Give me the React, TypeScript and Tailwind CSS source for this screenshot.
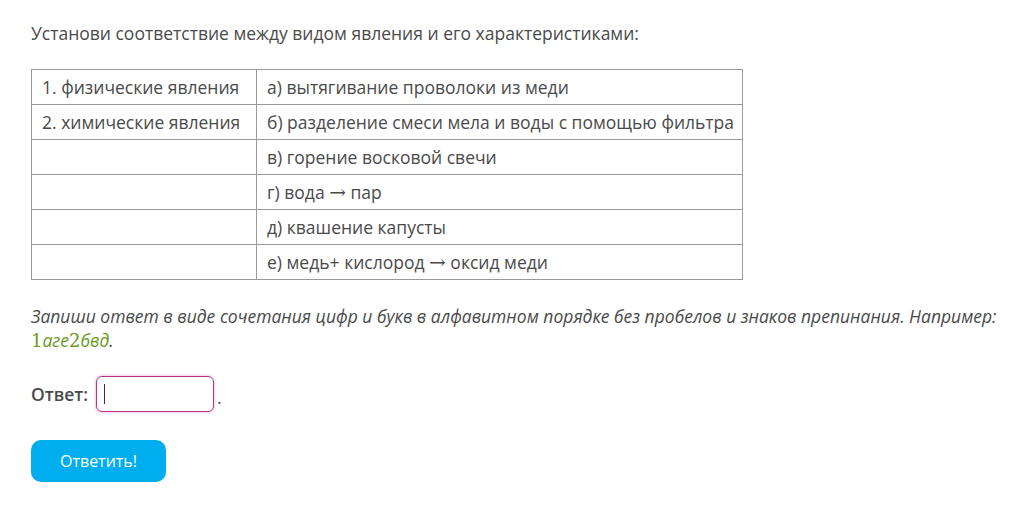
import { useState } from "react";

const Arrow = () => (
  <span className="font-['DejaVu_Serif',serif] text-[20px] leading-none">→</span>
);

const rows: [React.ReactNode, React.ReactNode][] = [
  ["1. физические явления", "а) вытягивание проволоки из меди"],
  ["2. химические явления", "б) разделение смеси мела и воды с помощью фильтра"],
  ["", "в) горение восковой свечи"],
  ["", <>г) вода <Arrow /> пар</>],
  ["", "д) квашение капусты"],
  ["", <>е) медь+ кислород <Arrow /> оксид меди</>],
];

const App = () => {
  const [answer, setAnswer] = useState("");
  return (
    <div className="min-h-[505px] bg-white px-[31px] pt-[20px] text-[17.5px] text-[#4a4a4a] font-['Open_Sans',sans-serif]">
      <p className="leading-[26px]">
        Установи соответствие между видом явления и его характеристиками:
      </p>

      <table className="mt-[23px] border-collapse">
        <tbody>
          {rows.map(([left, right], i) => (
            <tr key={i} className="h-[35px]">
              <td className="border border-[#9a9a9a] pl-[10px] pr-[10px] w-[225px] whitespace-nowrap">
                {left}
              </td>
              <td className="border border-[#9a9a9a] pl-[10px] pr-[6px] w-[486px] whitespace-nowrap">
                {right}
              </td>
            </tr>
          ))}
        </tbody>
      </table>

      <p className="mt-[24px] italic leading-[24px]">
        Запиши ответ в виде сочетания цифр и букв в алфавитном порядке без
        пробелов и знаков препинания. Например:{" "}
        <span className="text-[#6b9a23] not-italic">
          <span className="font-['DejaVu_Serif',serif] text-[18px]">1</span>
          <i>аге</i>
          <span className="font-['DejaVu_Serif',serif] text-[18px]">2</span>
          <i>бвд</i>
        </span>
        .
      </p>

      <div className="mt-[23px] flex items-center">
        <span className="font-semibold">Ответ:</span>
        <div className="relative ml-[8px]">
          <input
            value={answer}
            onChange={(e) => setAnswer(e.target.value)}
            className="block h-[36px] w-[118px] rounded-[6px] border border-[#b8338a] px-[8px] outline-none shadow-[0_0_3px_rgba(184,51,138,0.5)]"
          />
          {answer === "" && (
            <span className="absolute left-[8px] top-[8px] h-[20px] w-px bg-[#333]" />
          )}
        </div>
        <span className="ml-[3px] mt-[6px]">.</span>
      </div>

      <button className="mt-[28px] h-[42px] w-[135px] rounded-[10px] bg-[#00aeef] text-[16px] text-white">
        Ответить!
      </button>
    </div>
  );
};

export default App;
